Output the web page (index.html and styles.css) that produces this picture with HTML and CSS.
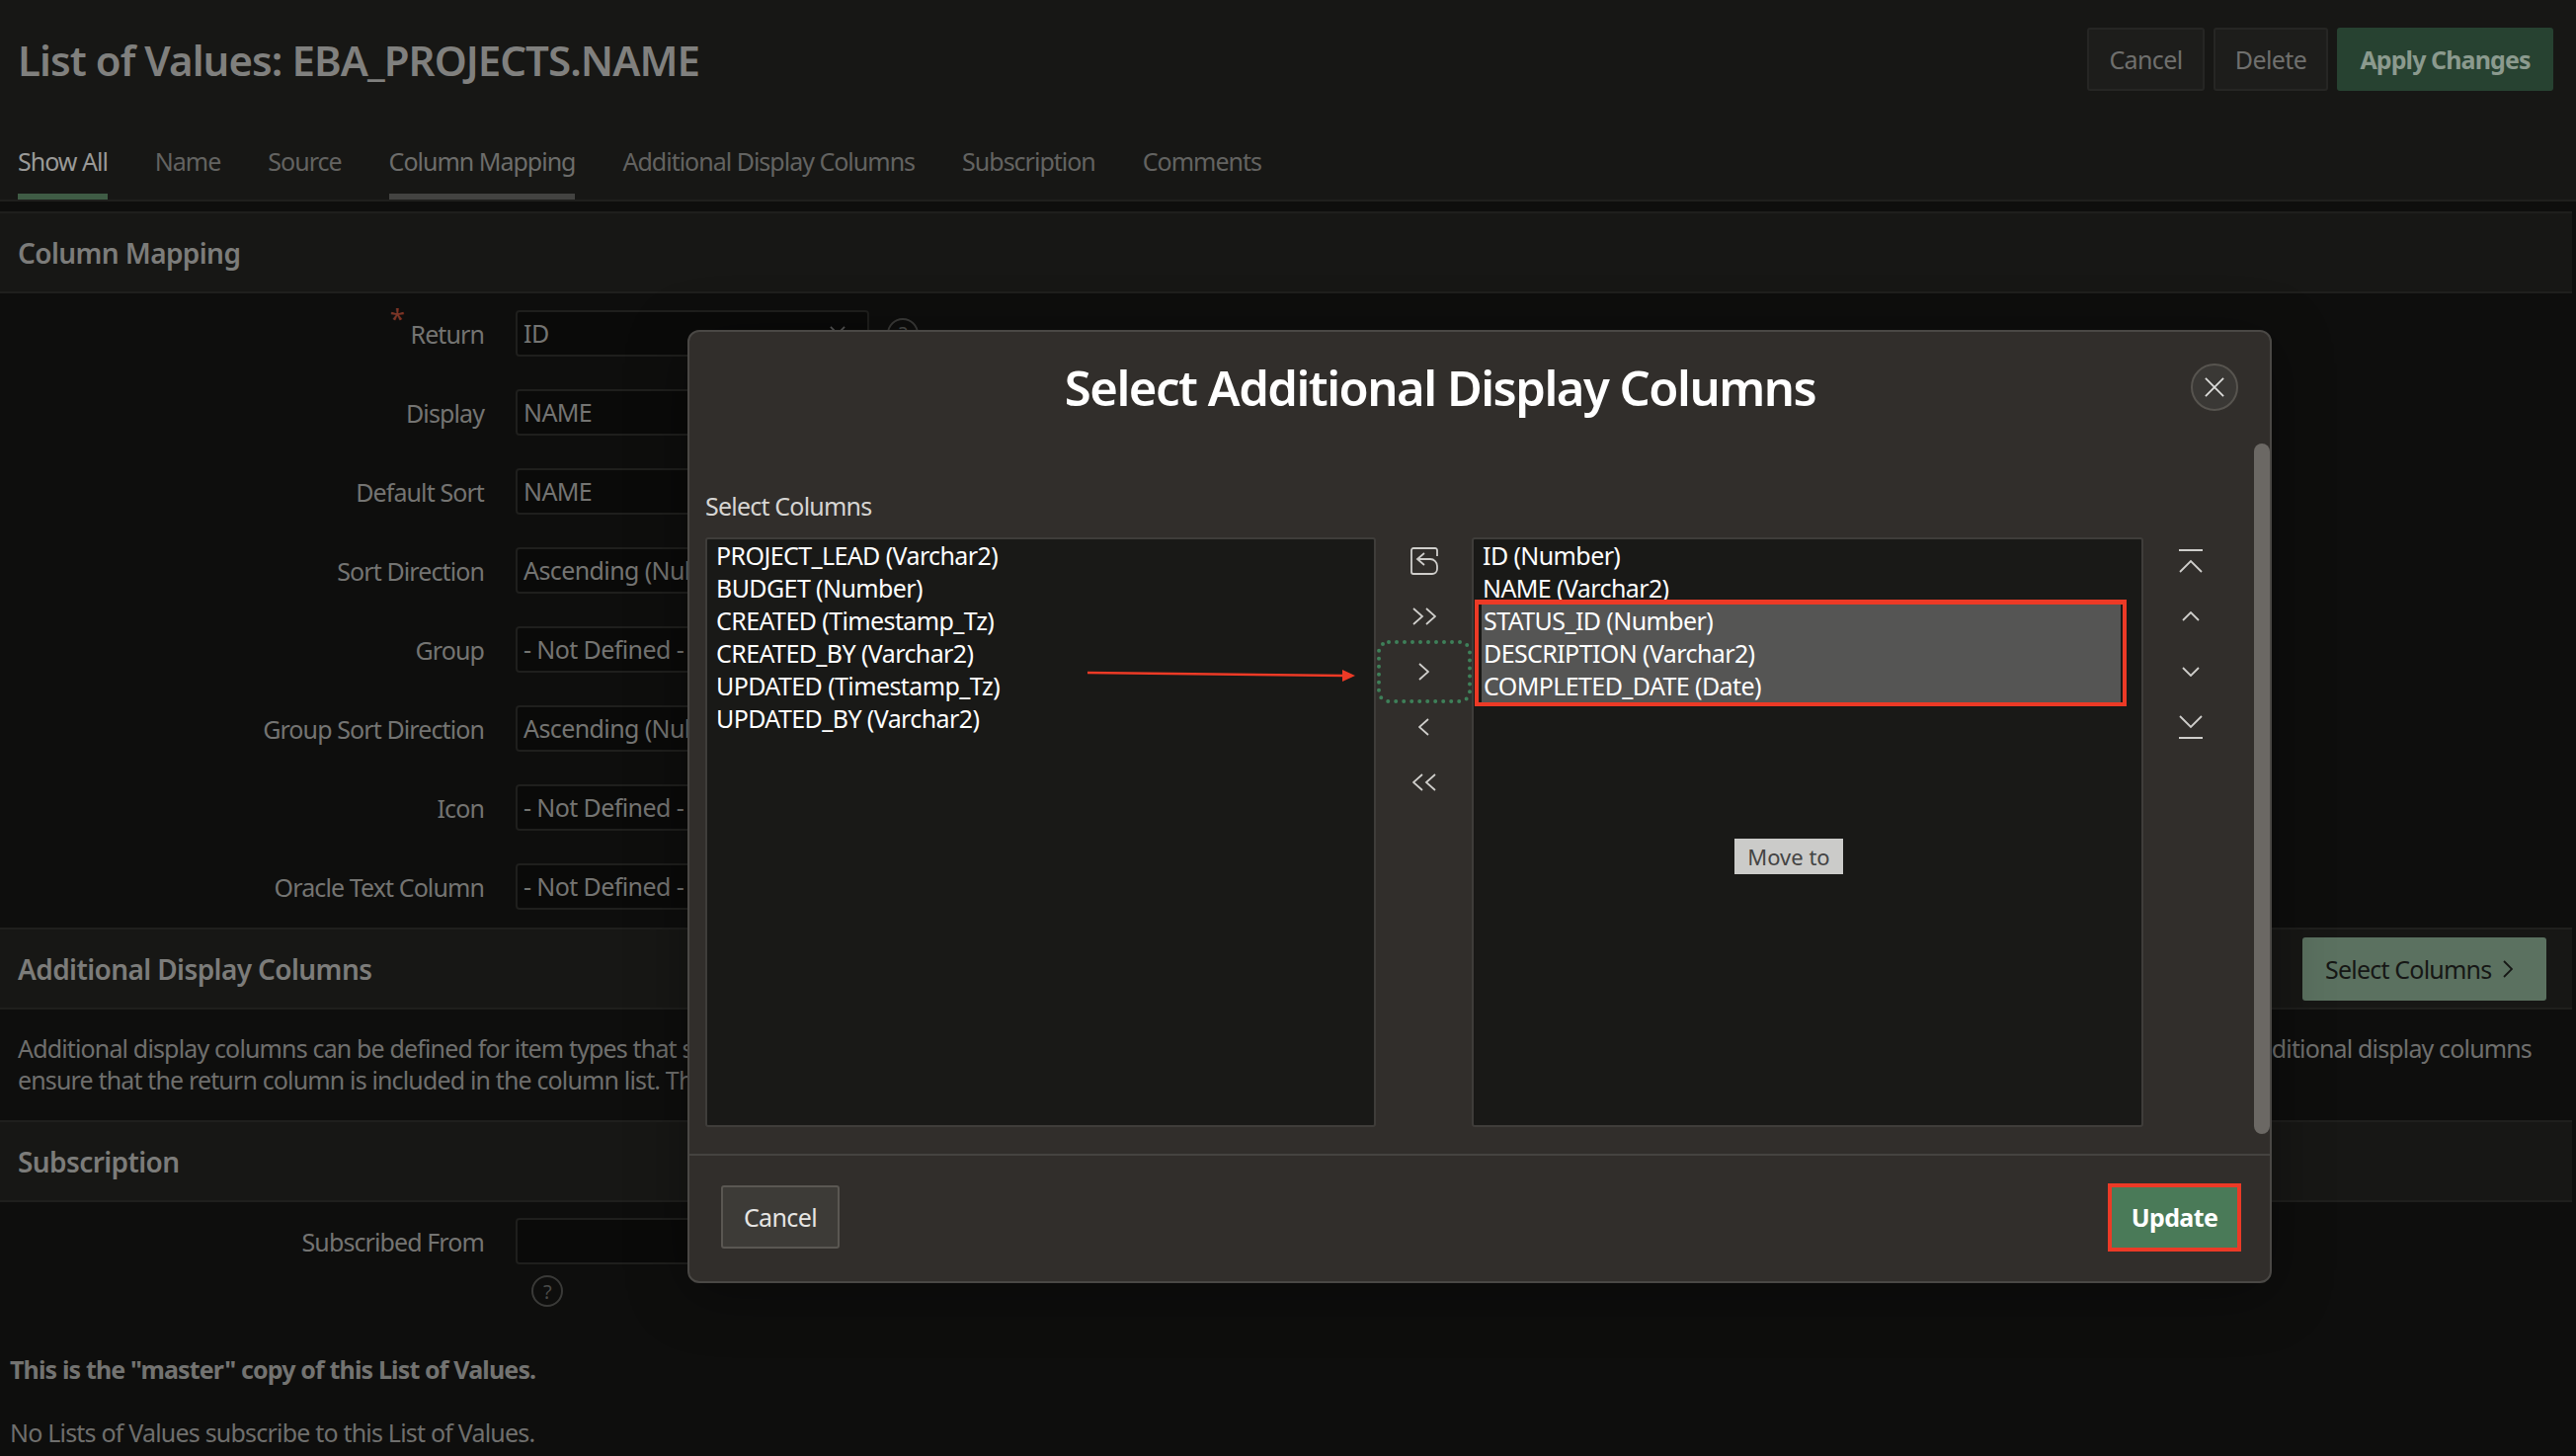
FILE: index.html
```html
<!DOCTYPE html>
<html lang="en">
<head>
    <meta charset="UTF-8">
    <title>List of Values: EBA_PROJECTS.NAME</title>
    <link rel="stylesheet" href="styles.css">
</head>
<body>
    <header class="page-head">
        <div class="title-row">
            <h1>List of Values: EBA_PROJECTS.NAME</h1>
            <div class="head-actions">
                <button class="btn-dim btn-cancel">Cancel</button>
                <button class="btn-dim btn-delete">Delete</button>
                <button class="btn-apply">Apply Changes</button>
            </div>
        </div>
        <nav class="tabs">
            <a class="tab tab-current">Show All</a>
            <a class="tab">Name</a>
            <a class="tab">Source</a>
            <a class="tab tab-visited">Column Mapping</a>
            <a class="tab">Additional Display Columns</a>
            <a class="tab">Subscription</a>
            <a class="tab">Comments</a>
        </nav>
    </header>

    <main class="page-body">
        <section>
            <h2 class="section-head">Column Mapping</h2>
            <div class="form-rows">
                <div class="form-row">
                    <label class="required">Return</label>
                    <div class="field field-select">ID
                        <svg class="field-chevron" viewBox="0 0 18 10"><path d="M1 1l8 8 8-8"/></svg>
                    </div>
                    <span class="help-dot">?</span>
                </div>
                <div class="form-row"><label>Display</label><div class="field">NAME</div></div>
                <div class="form-row"><label>Default Sort</label><div class="field">NAME</div></div>
                <div class="form-row"><label>Sort Direction</label><div class="field">Ascending (Nulls Last)</div></div>
                <div class="form-row"><label>Group</label><div class="field">- Not Defined -</div></div>
                <div class="form-row"><label>Group Sort Direction</label><div class="field">Ascending (Nulls Last)</div></div>
                <div class="form-row"><label>Icon</label><div class="field">- Not Defined -</div></div>
                <div class="form-row"><label>Oracle Text Column</label><div class="field">- Not Defined -</div></div>
            </div>
        </section>

        <section>
            <div class="section-head section-head-action">
                <h2>Additional Display Columns</h2>
                <button class="btn-select">Select Columns
                    <svg class="btn-chevron" viewBox="0 0 10 18"><path d="M1 1l8 8-8 8"/></svg>
                </button>
            </div>
            <div class="section-note">
                <p class="note-line"><span>Additional display columns can be defined for item types that support</span><span>additional display columns</span></p>
                <p class="note-line"><span>ensure that the return column is included in the column list. The</span></p>
            </div>
        </section>

        <section>
            <h2 class="section-head">Subscription</h2>
            <div class="form-row form-row-sub"><label>Subscribed From</label><div class="field"></div></div>
            <span class="help-dot help-dot-sub">?</span>
            <p class="master-note">This is the "master" copy of this List of Values.</p>
            <p class="sub-note">No Lists of Values subscribe to this List of Values.</p>
        </section>
    </main>

    <div class="dialog">
        <div class="dialog-head">
            <h2>Select Additional Display Columns</h2>
            <button class="dialog-close" aria-label="Close">
                <svg viewBox="0 0 22 22"><path d="M1 1l20 20M21 1L1 21"/></svg>
            </button>
        </div>
        <div class="dialog-body">
            <div class="shuttle-label">Select Columns</div>
            <div class="shuttle">
                <div class="shuttle-list shuttle-from">
                    <div class="shuttle-item">PROJECT_LEAD (Varchar2)</div>
                    <div class="shuttle-item">BUDGET (Number)</div>
                    <div class="shuttle-item">CREATED (Timestamp_Tz)</div>
                    <div class="shuttle-item">CREATED_BY (Varchar2)</div>
                    <div class="shuttle-item">UPDATED (Timestamp_Tz)</div>
                    <div class="shuttle-item">UPDATED_BY (Varchar2)</div>
                </div>
                <div class="shuttle-ctrl">
                    <button class="icon-btn">
                        <svg class="ico-reset" viewBox="0 0 28 28"><path d="M27 9V3a2 2 0 0 0-2-2H3a2 2 0 0 0-2 2v22a2 2 0 0 0 2 2h19a5 5 0 0 0 5-5v-3a7 7 0 0 0-7-7H7M14 6l-7 6 7 6"/></svg>
                    </button>
                    <button class="icon-btn">
                        <svg class="ico-double" viewBox="0 0 24 18"><path d="M1 1l9 8-9 8M14 1l9 8-9 8"/></svg>
                    </button>
                    <button class="icon-btn icon-btn-focus">
                        <svg class="focus-ring" viewBox="0 0 96 64"><rect x="2" y="2" width="92" height="60" rx="10"/></svg>
                        <svg class="ico-single" viewBox="0 0 11 18"><path d="M1 1l9 8-9 8"/></svg>
                    </button>
                    <button class="icon-btn">
                        <svg class="ico-single" viewBox="0 0 11 18"><path d="M10 1L1 9l9 8"/></svg>
                    </button>
                    <button class="icon-btn">
                        <svg class="ico-double" viewBox="0 0 24 18"><path d="M10 1L1 9l9 8M23 1l-9 8 9 8"/></svg>
                    </button>
                </div>
                <div class="shuttle-list shuttle-to">
                    <div class="shuttle-item">ID (Number)</div>
                    <div class="shuttle-item">NAME (Varchar2)</div>
                    <div class="picked-group">
                        <div class="shuttle-item picked">STATUS_ID (Number)</div>
                        <div class="shuttle-item picked">DESCRIPTION (Varchar2)</div>
                        <div class="shuttle-item picked">COMPLETED_DATE (Date)</div>
                    </div>
                    <span class="move-tip">Move to</span>
                </div>
                <div class="shuttle-ctrl shuttle-ctrl-order">
                    <button class="icon-btn">
                        <svg class="ico-edge" viewBox="0 0 24 24"><path d="M0 1h24M1 23l11-11 11 11"/></svg>
                    </button>
                    <button class="icon-btn">
                        <svg class="ico-step" viewBox="0 0 18 10"><path d="M1 9l8-8 8 8"/></svg>
                    </button>
                    <button class="icon-btn">
                        <svg class="ico-step" viewBox="0 0 18 10"><path d="M1 1l8 8 8-8"/></svg>
                    </button>
                    <button class="icon-btn">
                        <svg class="ico-edge" viewBox="0 0 24 24"><path d="M1 1l11 11L23 1M0 23h24"/></svg>
                    </button>
                </div>
            </div>
        </div>
        <div class="dialog-foot">
            <button class="btn-plain">Cancel</button>
            <button class="btn-update">Update</button>
        </div>
        <div class="dialog-scroll"></div>
    </div>

    <svg class="callout-arrow" viewBox="0 0 272 16"><path class="callout-line" d="M0 4l262 3"/><path class="callout-head" d="M258 1l13 6-13 6z"/></svg>
</body>
</html>
```

FILE: styles.css
```css
* {
    box-sizing: border-box;
}
html, body {
    margin: 0;
    height: 100%;
}
body {
    position: relative;
    width: 2608px;
    height: 1474px;
    overflow: hidden;
    background-color: #0e0e0d;
    color: #747472;
    font-family: "Noto Sans", sans-serif;
    font-size: 25px;
    letter-spacing: -0.6px;
}
h1, h2, p {
    margin: 0;
}
button {
    font-family: inherit;
    letter-spacing: inherit;
    cursor: pointer;
}
svg {
    display: block;
    fill: none;
}

/* page header */
.page-head {
    height: 204px;
    background-color: #171715;
    border-bottom: 2px solid #1f1f1d;
}
.title-row {
    display: flex;
    justify-content: space-between;
    height: 122px;
    padding: 28px 23px 0 18px;
}
.title-row h1 {
    font-size: 42px;
    line-height: 66px;
    font-weight: 600;
    color: #80807e;
    letter-spacing: -0.95px;
}
.head-actions {
    display: flex;
    gap: 9px;
    height: 64px;
}
.head-actions button {
    font-size: 25px;
    border-radius: 3px;
}
.btn-dim {
    background-color: #1d1d1b;
    border: 2px solid #262624;
    color: #6f6f6d;
}
.btn-cancel {
    width: 119px;
}
.btn-delete {
    width: 116px;
}
.head-actions .btn-apply {
    width: 219px;
    background-color: #274231;
    border: 0;
    color: #8b9a8e;
    font-weight: 700;
    letter-spacing: -0.9px;
}
.tabs {
    display: flex;
    gap: 48px;
    padding-left: 18px;
}
.tab {
    height: 80px;
    padding-top: 21px;
    color: #636361;
    border-bottom: 6px solid transparent;
    line-height: 40px;
    letter-spacing: -1px;
}
.tab-current {
    color: #9a9a98;
    border-bottom-color: #3f5c45;
}
.tab-visited {
    color: #6d6d6b;
    border-bottom-color: #434341;
}

/* page body */
.page-body {
    padding-top: 10px;
}
.section-head {
    display: flex;
    align-items: center;
    height: 83px;
    padding: 0 30px 0 18px;
    background-color: #171715;
    border-top: 2px solid #1f1f1d;
    border-bottom: 2px solid #1f1f1d;
    font-size: 28px;
    font-weight: 600;
    color: #7c7c7a;
    width: 2604px;
}
.section-head h2 {
    font-size: 28px;
    font-weight: 600;
}
.section-head-action {
    justify-content: space-between;
    padding-right: 26px;
}
.form-rows {
    display: flex;
    flex-direction: column;
    gap: 33px;
    padding: 17px 0 18px;
}
.form-row {
    display: flex;
    align-items: center;
    height: 47px;
}
.form-row label {
    width: 490px;
    margin-right: 32px;
    text-align: right;
    font-size: 25px;
    letter-spacing: -0.9px;
}
.required {
    position: relative;
}
.required::before {
    content: "*";
    position: absolute;
    right: 81px;
    top: -18px;
    color: #7a3527;
    font-size: 28px;
}
.field {
    position: relative;
    width: 358px;
    height: 47px;
    padding-left: 6px;
    background-color: #0a0a09;
    border: 2px solid #1f1f1d;
    border-radius: 4px;
    line-height: 43px;
    white-space: nowrap;
    overflow: hidden;
    color: #747472;
}
.field-chevron {
    position: absolute;
    right: 22px;
    top: 14px;
    width: 16px;
    stroke: #555;
    stroke-width: 2;
}
.help-dot {
    display: flex;
    align-items: center;
    justify-content: center;
    width: 32px;
    height: 32px;
    margin-left: 18px;
    border: 2px solid #3a3a38;
    border-radius: 50%;
    font-size: 20px;
    color: #4a4a48;
}
.help-dot-sub {
    margin: 11px 0 0 538px;
}
.btn-select {
    display: flex;
    align-items: center;
    gap: 12px;
    width: 247px;
    height: 64px;
    padding-left: 23px;
    background-color: #5b7160;
    border: 0;
    border-radius: 3px;
    color: #161715;
    font-size: 25px;
    letter-spacing: -0.8px;
}
.btn-chevron {
    width: 10px;
    stroke: #161715;
    stroke-width: 1.8;
}
.section-note {
    height: 112px;
    padding: 23px 45px 0 18px;
    line-height: 32px;
    color: #6f6f6d;
    letter-spacing: -0.85px;
}
.note-line {
    display: flex;
    justify-content: space-between;
}
.form-row-sub {
    margin-top: 16px;
}
.master-note {
    margin: 46px 0 0 10px;
    font-weight: 700;
    color: #737371;
    letter-spacing: -0.85px;
}
.sub-note {
    margin: 30px 0 0 10px;
    color: #6f6f6d;
    letter-spacing: -0.8px;
}

/* dialog */
.dialog {
    position: absolute;
    left: 696px;
    top: 334px;
    display: flex;
    flex-direction: column;
    width: 1604px;
    height: 965px;
    background-color: #312e2b;
    border: 2px solid #4a4845;
    border-radius: 12px;
    box-shadow: 0 10px 60px rgba(0, 0, 0, 0.35);
    color: #fff;
}
.dialog-head {
    display: flex;
    align-items: center;
    height: 112px;
    padding-right: 32px;
}
.dialog-head h2 {
    flex: 1;
    text-align: center;
    font-size: 49px;
    font-weight: 600;
    color: #fff;
    letter-spacing: -1.5px;
}
.dialog-close {
    display: flex;
    align-items: center;
    justify-content: center;
    width: 48px;
    height: 48px;
    padding: 0;
    background-color: #3a3835;
    border: 2px solid #57544f;
    border-radius: 50%;
}
.dialog-close svg {
    width: 20px;
    stroke: #dcdcda;
    stroke-width: 2;
}
.dialog-body {
    flex: 1;
    padding: 0 0 0 16px;
}
.shuttle-label {
    height: 96px;
    padding-top: 46px;
    line-height: 36px;
    color: #d6d5d3;
    letter-spacing: -0.8px;
}
.shuttle {
    display: flex;
    height: 597px;
}
.shuttle-list {
    position: relative;
    background-color: #191917;
    border: 2px solid #3f3d3a;
    border-radius: 3px;
    line-height: 33px;
    white-space: nowrap;
}
.shuttle-from {
    width: 679px;
}
.shuttle-to {
    width: 680px;
}
.shuttle-item {
    padding-left: 9px;
    height: 33px;
    color: #fff;
}
.picked-group {
    position: relative;
    margin: -5px 15px -4px 1px;
    padding: 0 2px 0 3px;
    border: 4px solid #ec3a26;
    border-top-width: 5px;
}
.picked {
    padding-left: 2px;
    background-color: #555554;
}
.move-tip {
    position: absolute;
    left: 264px;
    top: 303px;
    width: 110px;
    height: 36px;
    background-color: #cbcbc9;
    color: #444;
    font-size: 22px;
    line-height: 36px;
    text-align: center;
    letter-spacing: 0;
}
.shuttle-ctrl {
    display: flex;
    flex-direction: column;
    align-items: center;
    width: 97px;
    margin-top: -4px;
}
.shuttle-ctrl-order {
    width: 95px;
}
.icon-btn {
    position: relative;
    display: flex;
    align-items: center;
    justify-content: center;
    width: 86px;
    height: 56px;
    padding: 0;
    background: none;
    border: 0;
}
.icon-btn svg {
    stroke: #cfcecb;
    stroke-width: 1.8;
}
.icon-btn .focus-ring {
    position: absolute;
    left: -5px;
    top: -4px;
    width: 96px;
    height: 64px;
    stroke: #3e8059;
    stroke-width: 4;
    stroke-linecap: round;
    stroke-dasharray: 0 8;
}
.ico-reset {
    width: 28px;
}
.ico-double {
    width: 24px;
}
.ico-single {
    width: 11px;
}
.ico-edge {
    width: 24px;
}
.ico-step {
    width: 18px;
}
.dialog-foot {
    display: flex;
    justify-content: space-between;
    align-items: center;
    height: 129px;
    padding: 0 29px 3px 32px;
    border-top: 2px solid #454340;
}
.btn-plain {
    width: 120px;
    height: 64px;
    background-color: #3d3b37;
    border: 2px solid #5a5752;
    border-radius: 3px;
    color: #e6e5e3;
    font-size: 25px;
}
.btn-update {
    width: 135px;
    height: 69px;
    background-color: #4a7a58;
    border: 4px solid #ec3a26;
    color: #fff;
    font-size: 25px;
    font-weight: 700;
}
.dialog-scroll {
    position: absolute;
    right: 0;
    top: 113px;
    width: 16px;
    height: 699px;
    background-color: #6b6864;
    border-radius: 8px;
}

/* annotation drawn on top of the shot */
.callout-arrow {
    position: absolute;
    left: 1101px;
    top: 677px;
    width: 272px;
    height: 16px;
}
.callout-line {
    stroke: #ec3a26;
    stroke-width: 2.5;
}
.callout-head {
    fill: #ec3a26;
}
```
